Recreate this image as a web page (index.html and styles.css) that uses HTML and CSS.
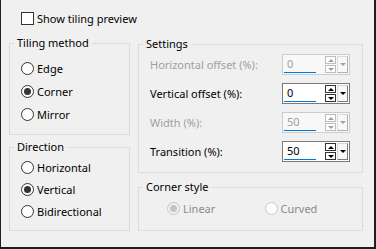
FILE: index.html
```html
<!DOCTYPE html>
<html>
    <head>
        <meta charset="utf-8" />
        <title>Tiling</title>
        <link rel="stylesheet" href="styles.css">
    </head>
    <body>
        <div class="dialog">
            <div class="check-row">
                <span class="checkbox"></span>
                <span>Show tiling preview</span>
            </div>
            <div class="columns">
                <div class="col-left">
                    <fieldset class="group tiling">
                        <legend>Tiling method</legend>
                        <div class="group-body">
                            <div class="radio-row"><span class="radio"></span>Edge</div>
                            <div class="radio-row"><span class="radio checked"></span>Corner</div>
                            <div class="radio-row"><span class="radio"></span>Mirror</div>
                        </div>
                    </fieldset>
                    <fieldset class="group direction">
                        <legend>Direction</legend>
                        <div class="group-body">
                            <div class="radio-row"><span class="radio"></span>Horizontal</div>
                            <div class="radio-row"><span class="radio checked"></span>Vertical</div>
                            <div class="radio-row"><span class="radio"></span>Bidirectional</div>
                        </div>
                    </fieldset>
                </div>
                <div class="col-right">
                    <fieldset class="group settings">
                        <legend>Settings</legend>
                        <div class="group-body">
                            <div class="field-row disabled">
                                <span class="label">Horizontal offset (%):</span>
                                <div class="spin">
                                    <div class="value"><span>0</span><i class="bar"></i></div>
                                    <div class="arrows"><b class="up"></b><b class="down"></b></div>
                                    <div class="drop"></div>
                                </div>
                            </div>
                            <div class="field-row">
                                <span class="label">Vertical offset (%):</span>
                                <div class="spin">
                                    <div class="value"><span>0</span><i class="bar"></i></div>
                                    <div class="arrows"><b class="up"></b><b class="down"></b></div>
                                    <div class="drop"></div>
                                </div>
                            </div>
                            <div class="field-row disabled">
                                <span class="label">Width (%):</span>
                                <div class="spin">
                                    <div class="value"><span>50</span><i class="bar"></i></div>
                                    <div class="arrows"><b class="up"></b><b class="down"></b></div>
                                    <div class="drop"></div>
                                </div>
                            </div>
                            <div class="field-row">
                                <span class="label">Transition (%):</span>
                                <div class="spin">
                                    <div class="value"><span>50</span><i class="bar"></i></div>
                                    <div class="arrows"><b class="up"></b><b class="down"></b></div>
                                    <div class="drop"></div>
                                </div>
                            </div>
                        </div>
                    </fieldset>
                    <fieldset class="group corner">
                        <legend>Corner style</legend>
                        <div class="group-body corner-row">
                            <div class="radio-item disabled"><span class="radio checked"></span>Linear</div>
                            <div class="radio-item disabled"><span class="radio"></span>Curved</div>
                        </div>
                    </fieldset>
                </div>
            </div>
        </div>
    </body>
</html>
```

FILE: styles.css
```css
html, body {
    margin: 0;
    padding: 0;
}
body {
    font-family: "Noto Sans", "Open Sans", sans-serif;
    font-size: 11px;
    color: #000;
    background: #f0f0f0;
}
.dialog {
    box-sizing: border-box;
    width: 376px;
    height: 249px;
    background: #f0f0f0;
    border-left: 1px solid #1e1e1e;
    border-right: 2px solid #1e1e1e;
    border-bottom: 2px solid #1e1e1e;
    padding: 11px 0 0 8px;
}
.check-row {
    display: flex;
    align-items: center;
    height: 15px;
    padding-left: 12px;
}
.checkbox {
    box-sizing: border-box;
    width: 13px;
    height: 13px;
    border: 1px solid #333;
    background: #fff;
    margin-right: 3px;
}
.columns {
    display: flex;
    gap: 8px;
    margin-top: 9px;
}
.col-left {
    width: 121px;
    display: flex;
    flex-direction: column;
    gap: 4px;
}
.col-right {
    width: 225px;
    margin-top: 1px;
    display: flex;
    flex-direction: column;
    gap: 6px;
}
.group {
    box-sizing: border-box;
    margin: 0;
    padding: 0;
    min-width: 0;
    border: 1px solid #dcdcdc;
}
.group legend {
    margin-left: 4px;
    padding: 0 3px;
    line-height: 16px;
}
.tiling {
    height: 100px;
}
.tiling .group-body {
    padding: 6px 0 0 11px;
}
.direction {
    height: 92px;
}
.direction .group-body {
    padding: 1px 0 0 11px;
}
.radio-row {
    display: flex;
    align-items: center;
    height: 23px;
}
.direction .radio-row {
    height: 22px;
}
.radio {
    box-sizing: border-box;
    width: 13px;
    height: 13px;
    border: 1px solid #333;
    border-radius: 50%;
    background: #fff;
    margin-right: 3px;
    display: flex;
    align-items: center;
    justify-content: center;
    flex-shrink: 0;
}
.radio.checked::after {
    content: "";
    width: 7px;
    height: 7px;
    border-radius: 50%;
    background: #333;
}
.settings {
    height: 137px;
}
.settings .group-body {
    padding: 2px 12px 0 11px;
}
.field-row {
    display: flex;
    align-items: center;
    justify-content: space-between;
    height: 21px;
    margin-bottom: 8px;
}
.field-row.disabled .label {
    color: #a0a0a0;
}
.spin {
    box-sizing: border-box;
    display: flex;
    width: 68px;
    height: 21px;
    border: 1px solid #7a7a7a;
    background: #fff;
}
.value {
    flex: 1;
    display: flex;
    flex-direction: column;
    justify-content: space-between;
    padding: 0 0 1px 1px;
}
.value span {
    line-height: 16px;
    padding-left: 3px;
    margin-top: 1px;
}
.bar {
    display: block;
    width: 32px;
    height: 3px;
    background: #0078d7;
}
.arrows {
    width: 11px;
    display: flex;
    flex-direction: column;
    gap: 1px;
    padding: 1px 1px 1px 0;
}
.arrows b {
    box-sizing: border-box;
    flex: 1;
    border: 1px solid #333;
    background: #fff;
    display: flex;
    align-items: center;
    justify-content: center;
}
.arrows .up::after {
    content: "";
    border-left: 3px solid transparent;
    border-right: 3px solid transparent;
    border-bottom: 3px solid #000;
}
.arrows .down::after {
    content: "";
    border-left: 3px solid transparent;
    border-right: 3px solid transparent;
    border-top: 3px solid #000;
}
.drop {
    box-sizing: border-box;
    width: 11px;
    margin: 1px 1px 1px 0;
    border: 1px solid #d6d6d6;
    border-right-color: #7a7a7a;
    border-bottom-color: #7a7a7a;
    background: #f8f8f8;
    display: flex;
    align-items: center;
    justify-content: center;
}
.drop::after {
    content: "";
    border-left: 3px solid transparent;
    border-right: 3px solid transparent;
    border-top: 3px solid #000;
}
.field-row.disabled .spin {
    border-color: #cccccc;
    background: #f8f8f8;
}
.field-row.disabled .value span {
    color: #a0a0a0;
}
.field-row.disabled .arrows b {
    border-color: #bdbdbd;
}
.field-row.disabled .arrows .up::after {
    border-bottom-color: #a0a0a0;
}
.field-row.disabled .arrows .down::after,
.field-row.disabled .drop::after {
    border-top-color: #a0a0a0;
}
.field-row.disabled .drop {
    border-color: #dcdcdc;
    border-right-color: #b0b0b0;
    border-bottom-color: #b0b0b0;
}
.corner {
    height: 52px;
}
.corner-row {
    display: flex;
    height: 16px;
    padding: 5px 0 0 28px;
}
.radio-item {
    display: flex;
    align-items: center;
    width: 99px;
}
.radio-item.disabled {
    color: #8a8a8a;
}
.radio-item.disabled .radio {
    border-color: #c8c8c8;
    background: #fdfdfd;
}
.radio-item.disabled .radio.checked {
    background: #f0f0f0;
}
.radio-item.disabled .radio.checked::after {
    background: #c4c4c4;
}
```
